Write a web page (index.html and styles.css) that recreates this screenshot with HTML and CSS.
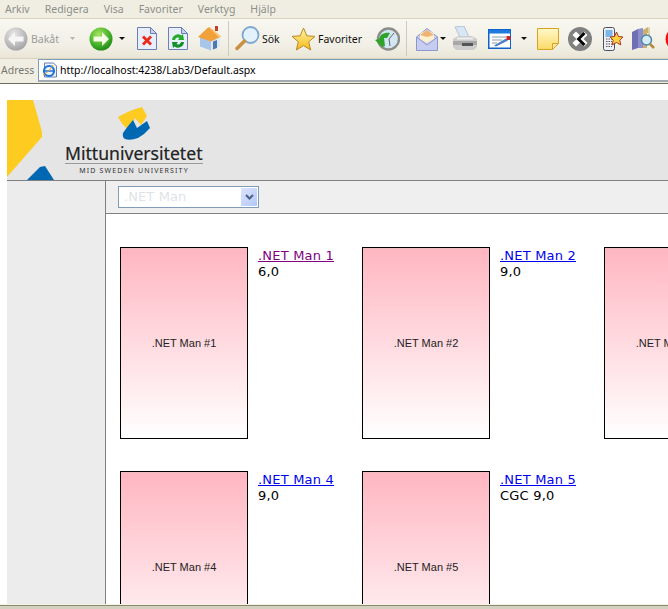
FILE: index.html
```html
<!DOCTYPE html>
<html lang="sv">
<head>
<meta charset="utf-8">
<title>Lab3</title>
<link rel="stylesheet" href="styles.css">
</head>
<body>
<div class="window">
  <nav class="menubar">
    <span>Arkiv</span><span>Redigera</span><span>Visa</span><span>Favoriter</span><span>Verktyg</span><span>Hjälp</span>
  </nav>
  <div class="toolbar">
    <svg class="ico back" width="24" height="24" viewBox="0 0 24 24"><defs><radialGradient id="gb" cx=".4" cy=".3" r=".8"><stop offset="0" stop-color="#e8e8e8"/><stop offset="1" stop-color="#9c9c9c"/></radialGradient></defs><circle cx="12" cy="12" r="11.500" fill="url(#gb)"/><path d="M4 12l7-7v4.500h8.500v5H11V19z" fill="#f6f6f6"/></svg>
    <span class="lbl off">Bakåt</span>
    <svg class="ar off-ar" width="5" height="3" viewBox="0 0 5 3"><path d="M0 0h5l-2.500 3z" fill="#b4b4ac"/></svg>
    <svg class="ico fwd" width="24" height="24" viewBox="0 0 24 24"><defs><radialGradient id="gf" cx=".4" cy=".3" r=".8"><stop offset="0" stop-color="#a6e45e"/><stop offset=".6" stop-color="#42b027"/><stop offset="1" stop-color="#157a12"/></radialGradient></defs><circle cx="12" cy="12" r="11.500" fill="url(#gf)"/><path d="M20 12l-7-7v4.500H4.500v5H13V19z" fill="#f6fbe8"/></svg>
    <svg class="ar a1" width="6" height="3" viewBox="0 0 6 3"><path d="M0 0h6l-3 3z" fill="#111"/></svg>
    <svg class="ico stop" width="20" height="23" viewBox="0 0 20 23"><path d="M.5.500h13l6 6v16H.5z" fill="#e8eefa" stroke="#6c7fb8"/><path d="M13.500.500v6h6z" fill="#c6d2ee" stroke="#6c7fb8"/><path d="M5 10.500l2-2 3 3 3-3 2 2-3 3 3 3-2 2-3-3-3 3-2-2 3-3z" fill="#ea2b1a"/></svg>
    <svg class="ico refresh" width="20" height="23" viewBox="0 0 20 23"><path d="M.5.500h13l6 6v16H.5z" fill="#e8eefa" stroke="#6c7fb8"/><path d="M13.500.500v6h6z" fill="#c6d2ee" stroke="#6c7fb8"/><path d="M4 13a6 6 0 0 1 9.500-4.500L15 7l1 6h-6l1.500-2a3 3 0 0 0-4.500 2z" fill="#25ab2c"/><path d="M16 15a6 6 0 0 1-9.500 4.500L5 21l-1-6h6l-1.500 2a3 3 0 0 0 4.500-2z" fill="#15912a"/></svg>
    <svg class="ico home" width="24" height="25" viewBox="0 0 24 25"><path d="M2 11l10-2 10 2v9l-9 4.500-11-4z" fill="#dce8f6"/><path d="M2 11l11 4v9.500l-11-4z" fill="#a8c6ea"/><path d="M15 15.500l4-1.500v8l-4 1.500z" fill="#4f76ae"/><path d="M0 11L10 1.500h2L23 10.500l-10 5z" fill="#f2a03a"/><path d="M11 1.500h1l11 9-2 .9z" fill="#fbc878"/><rect x="17" y="0" width="3" height="5" fill="#c0402a"/></svg>
    <i class="sep s1"></i>
    <svg class="ico search" width="25" height="25" viewBox="0 0 25 25"><circle cx="15.500" cy="9" r="8" fill="#e2f2fc" stroke="#7fa8cc" stroke-width="1.800"/><path d="M9.500 15l-7.500 7.500" stroke="#c9903f" stroke-width="3.500" stroke-linecap="round"/></svg>
    <span class="lbl sok">Sök</span>
    <svg class="ico star" width="25" height="24" viewBox="0 0 25 24"><defs><linearGradient id="gs" x1="0" y1="0" x2="0" y2="1"><stop offset="0" stop-color="#fff6a8"/><stop offset="1" stop-color="#f6b816"/></linearGradient></defs><path d="M12.500 1l3.300 7.800 8.200.6-6.300 5.400 2 8.200-7.200-4.400-7.200 4.400 2-8.200L1 9.400l8.200-.6z" fill="url(#gs)" stroke="#b98a22"/></svg>
    <span class="lbl fav">Favoriter</span>
    <svg class="ico hist" width="25" height="24" viewBox="0 0 25 24"><circle cx="13.500" cy="12" r="10.500" fill="#d2e6f4" stroke="#8d8d88" stroke-width="2.400"/><path d="M14 12l5-6M14 12l1 7" stroke="#666"/><path d="M0 13l4-1c1-5 6-7 11-6l-3 5-3 0 1 8-3 1z" fill="#2fa329"/></svg>
    <i class="sep s2"></i>
    <svg class="ico mail" width="22" height="24" viewBox="0 0 22 24"><path d="M.5 10L11 1.500 21.500 10v13.500H.5z" fill="#c6cdf0" stroke="#8d97cf"/><path d="M4 12V6.500L11 3l7 3.500V12l-7 4z" fill="#fdf0cf"/><path d="M4 8l7-5 7 5-7 2z" fill="#eeb274"/><path d="M.5 10l10.500 8 10.500-8" fill="none" stroke="#8d97cf"/></svg>
    <svg class="ar a2" width="6" height="3" viewBox="0 0 6 3"><path d="M0 0h6l-3 3z" fill="#111"/></svg>
    <svg class="ico print" width="24" height="25" viewBox="0 0 24 25"><path d="M2 1l9-1 5 11H7z" fill="#d8e6f6" stroke="#9fb2c8" stroke-width=".7"/><path d="M0 13l5-3h14l5 3v8l-3 3H3l-3-3z" fill="#cdcdcd"/><path d="M0 15h24v4H0z" fill="#a8a8a8"/><path d="M9 17h11v3H9z" fill="#555"/><path d="M4 11.500h16v2H4z" fill="#eee"/></svg>
    <svg class="ico edit" width="23" height="20" viewBox="0 0 23 20"><rect x=".75" y=".75" width="22" height="18.500" fill="#fff" stroke="#0f62c8" stroke-width="1.500"/><rect x="1" y="1" width="21.500" height="3.500" fill="#1f7ae0"/><path d="M4 8h14M4 11h10M4 14h5" stroke="#8d9aa8"/><path d="M6 16.500l12-7 2 2-12 6z" fill="#4a7cc8"/><rect x="18.500" y="7" width="4" height="4" fill="#c8242a"/></svg>
    <svg class="ar a3" width="6" height="3" viewBox="0 0 6 3"><path d="M0 0h6l-3 3z" fill="#111"/></svg>
    <svg class="ico note" width="22" height="22" viewBox="0 0 22 22"><defs><linearGradient id="gn" x1="0" y1="0" x2="0" y2="1"><stop offset="0" stop-color="#fff9c8"/><stop offset="1" stop-color="#fbd968"/></linearGradient></defs><path d="M.5.500h21v15l-6 6H.5z" fill="url(#gn)" stroke="#d8a323"/><path d="M15.500 21.500v-6h6z" fill="#f7e9a6" stroke="#d8a323"/></svg>
    <svg class="ico closex" width="24" height="24" viewBox="0 0 24 24"><circle cx="12" cy="12" r="12" fill="#808080"/><path d="M4.500 8L8 4.500l4 4 4-4L19.500 8l-4 4 4 4-3.500 3.500-4-4-4 4L4.500 16l4-4z" fill="#fff"/><path d="M15.500 5l2 2-5 5 5 5-2 2-7-7z" fill="#000"/></svg>
    <svg class="ico phone" width="20" height="24" viewBox="0 0 20 24"><rect x=".5" y=".5" width="11" height="23" rx="2" fill="#eef0f4" stroke="#4a5060"/><rect x="2.500" y="3" width="7" height="7" fill="#79b6ea"/><path d="M3 12h6M3 14.500h6M3 17h6M3 19.500h6" stroke="#555" stroke-dasharray="1.500 1"/><path d="M13.500 5l2 4.500 4.500.5-3.200 3.200 1 4.700-4.300-2.400-4.300 2.400 1-4.700L7 10l4.500-.5z" fill="#fbd23c" stroke="#a8342a"/></svg>
    <svg class="ico book" width="23" height="24" viewBox="0 0 23 24"><path d="M0 5l6-3v19l-6 2z" fill="#6f6fb4"/><path d="M6 2l5-1v20H6z" fill="#8e8ecc"/><path d="M11 3l5-3v6h-1v15h-4z" fill="#c8b070"/><path d="M16 0l2 1v8h-2z" fill="#e0d0a0"/><circle cx="14.500" cy="13" r="5" fill="#d4ecf6" stroke="#4f86a8" stroke-width="1.500"/><path d="M18 17l4 4" stroke="#b48a38" stroke-width="2.500"/></svg>
    <svg class="ico red" width="24" height="24" viewBox="0 0 24 24"><circle cx="12" cy="12" r="11.500" fill="#ee1010"/></svg>
  </div>
  <div class="addressbar">
    <span class="adr">Adress</span>
    <div class="field">
      <svg class="ie" width="16" height="16" viewBox="0 0 16 16"><path d="M2.500 1h9l3 3v11h-12z" fill="#eef3fb" stroke="#6b7fb0"/><circle cx="7" cy="9" r="5" fill="none" stroke="#1b74d8" stroke-width="2.200"/><path d="M3 9h8" stroke="#1b74d8" stroke-width="1.500"/><path d="M1 13c3-1 9-7 10-10" fill="none" stroke="#e1a020"/></svg>
      <span class="url">http://localhost:4238/Lab3/Default.aspx</span>
    </div>
  </div>

  <div class="viewport">
    <div class="page">
      <header class="banner">
        <svg class="shapes" width="54" height="80" viewBox="0 0 54 80"><path d="M0 0h26l9 32v5L0 77z" fill="#fecb21"/><path d="M20 80l13-13 5-1 9 14z" fill="#0068b3"/></svg>
        <div class="logo">
          <svg class="mark" width="34" height="34" viewBox="0 0 34 34"><path d="M0 10Q12 3 24 0l5 9-6 9-6-7-5 9-4 1Q3 16 0 10z" fill="#fecb21"/><path d="M5 26q4-6 10-13l4 8 10-7 3 7q-5 6-12 10-8 3-13 1-3-2-2-6z" fill="#0068b3"/></svg>
          <div class="logoname">Mittuniversitetet</div>
          <div class="logosub">MID SWEDEN UNIVERSITY</div>
        </div>
      </header>
      <div class="body">
        <aside class="side"></aside>
        <main class="main">
          <div class="filter">
            <div class="select">
              <span class="seltext">.NET Man</span>
              <span class="selbtn"><svg width="9" height="7" viewBox="0 0 9 7"><path d="M1 1l3.500 3.500L8 1" fill="none" stroke="#4d6185" stroke-width="2"/></svg></span>
            </div>
          </div>
          <div class="grid">
            <article class="item">
              <div class="pic">.NET Man #1</div>
              <div class="info"><a class="visited" href="#">.NET Man 1</a><p>6,0</p></div>
            </article>
            <article class="item">
              <div class="pic">.NET Man #2</div>
              <div class="info"><a href="#">.NET Man 2</a><p>9,0</p></div>
            </article>
            <article class="item">
              <div class="pic">.NET Man #3</div>
              <div class="info"><a href="#">.NET Man 3</a><p>9,0</p></div>
            </article>
            <article class="item">
              <div class="pic">.NET Man #4</div>
              <div class="info"><a href="#">.NET Man 4</a><p>9,0</p></div>
            </article>
            <article class="item">
              <div class="pic">.NET Man #5</div>
              <div class="info"><a href="#">.NET Man 5</a><p>CGC 9,0</p></div>
            </article>
          </div>
        </main>
      </div>
    </div>
  </div>
  <div class="statusedge"></div>
</div>
</body>
</html>
```

FILE: styles.css
```css
* { box-sizing: border-box; }
html, body { margin: 0; height: 100%; overflow: hidden; background: #fff; }
.window { display: flex; flex-direction: column; height: 609px; width: 668px; overflow: hidden; font-family: "Noto Sans", sans-serif; font-size: 10.5px; }

.menubar { height: 19px; flex: none; display: flex; align-items: center; padding-left: 5px; gap: 15px; background: #f0eee3; border-bottom: 1px solid #d8d4c0; color: #8e8e8a; }

.toolbar { height: 40px; flex: none; display: flex; align-items: center; padding-left: 4px; background: linear-gradient(#f8f7f1, #f1efe5 70%, #e9e6d6); border-bottom: 1px solid #d8d4c0; overflow: hidden; }
.ico { flex: none; display: block; }
.ar { flex: none; display: block; }
.lbl { flex: none; color: #111; }
.lbl.off { color: #9c9c98; margin-left: 3px; width: 28px; }
.off-ar { margin-left: 11px; }
.fwd { margin-left: 14px; }
.a1 { margin-left: 6px; }
.stop { margin-left: 12px; }
.refresh { margin-left: 11px; }
.home { margin-left: 10px; }
.sep { flex: none; width: 1px; height: 35px; background: #cfcbb8; }
.s1 { margin-left: 6px; }
.search { margin-left: 6px; }
.sok { margin-left: 2px; width: 18px; }
.star { margin-left: 11px; }
.fav { margin-left: 2px; width: 45px; }
.hist { margin-left: 12px; }
.s2 { margin-left: 6px; }
.mail { margin-left: 9px; }
.a2 { margin-left: 2px; }
.print { margin-left: 7px; }
.edit { margin-left: 11px; }
.a3 { margin-left: 10px; }
.note { margin-left: 10px; }
.closex { margin-left: 9px; }
.phone { margin-left: 11px; }
.book { margin-left: 9px; }
.red { margin-left: 10px; }

.addressbar { height: 25px; flex: none; display: flex; background: #f0eee3; border-bottom: 1px solid #6f6f60; }
.adr { width: 38px; flex: none; padding-left: 1px; line-height: 22px; color: #77776f; }
.field { flex: 1; display: flex; align-items: center; height: 23px; padding-left: 3px; background: #fff; border: 1px solid #7f9db9; border-right: 0; border-bottom: 2px solid #a3aab2; }
.ie { flex: none; }
.url { margin-left: 2px; color: #000; }

.viewport { flex: 1; min-height: 0; overflow: hidden; padding: 16px 0 0 7px; background: #fff; }
.page { width: 900px; }

.banner { height: 81px; display: flex; position: relative; background: #e5e5e5; border-bottom: 1px solid #808080; }
.shapes { flex: none; display: block; }
.logo { flex: none; width: 138px; margin-left: 4px; position: relative; }
.mark { position: absolute; left: 53px; top: 7px; }
.logoname { position: absolute; left: 0; top: 40px; width: 138px; font-size: 17.6px; line-height: 26px; color: #222; white-space: nowrap; -webkit-text-stroke: .2px #222; }
.logosub { position: absolute; left: 0; top: 63px; width: 138px; border-top: 1px solid #9a9a9a; padding-top: 2px; text-align: center; font-size: 7px; line-height: 10px; letter-spacing: 1.150px; color: #333; white-space: nowrap; }

.body { display: flex; height: 500px; }
.side { width: 99px; flex: none; background: #ececec; border-right: 1px solid #808080; }
.main { flex: 1; }
.filter { height: 33px; padding: 5px 0 0 12px; background: #efefef; border-bottom: 1px solid #808080; }
.select { display: flex; width: 141px; height: 22px; padding: 1px; background: #fff; border: 1px solid #7f9db9; }
.seltext { flex: 1; padding-left: 4px; font-family: "DejaVu Sans", sans-serif; font-size: 13px; line-height: 18px; letter-spacing: .1px; color: #dfe3e8; }
.selbtn { width: 16px; flex: none; display: flex; align-items: center; justify-content: center; background: linear-gradient(135deg, #dbe4fd, #b3c8f8); }

.grid { display: grid; grid-template-columns: repeat(3, 242px); grid-auto-rows: 224px; padding: 33px 0 0 14px; }
.item { display: flex; align-items: flex-start; }
.pic { width: 128px; height: 192px; flex: none; display: flex; align-items: center; justify-content: center; border: 1px solid #000; background: linear-gradient(#ffb6c1, #fff); box-shadow: inset 0 1px 0 #eebcc0; font-family: "Liberation Sans", sans-serif; font-size: 11px; color: #222; }
.info { margin-left: 10px; padding-top: 1px; font-family: "DejaVu Sans", sans-serif; font-size: 13px; line-height: 16px; letter-spacing: .2px; color: #000; white-space: nowrap; }
.info a { color: #0000ee; text-decoration: underline; }
.info a.visited { color: #800080; }
.info p { margin: 0; }

.statusedge { height: 5px; flex: none; background: #d4d0c0; border-top: 1px solid #f6f4e4; box-shadow: inset 0 1px 0 #8a8a70; }
```
